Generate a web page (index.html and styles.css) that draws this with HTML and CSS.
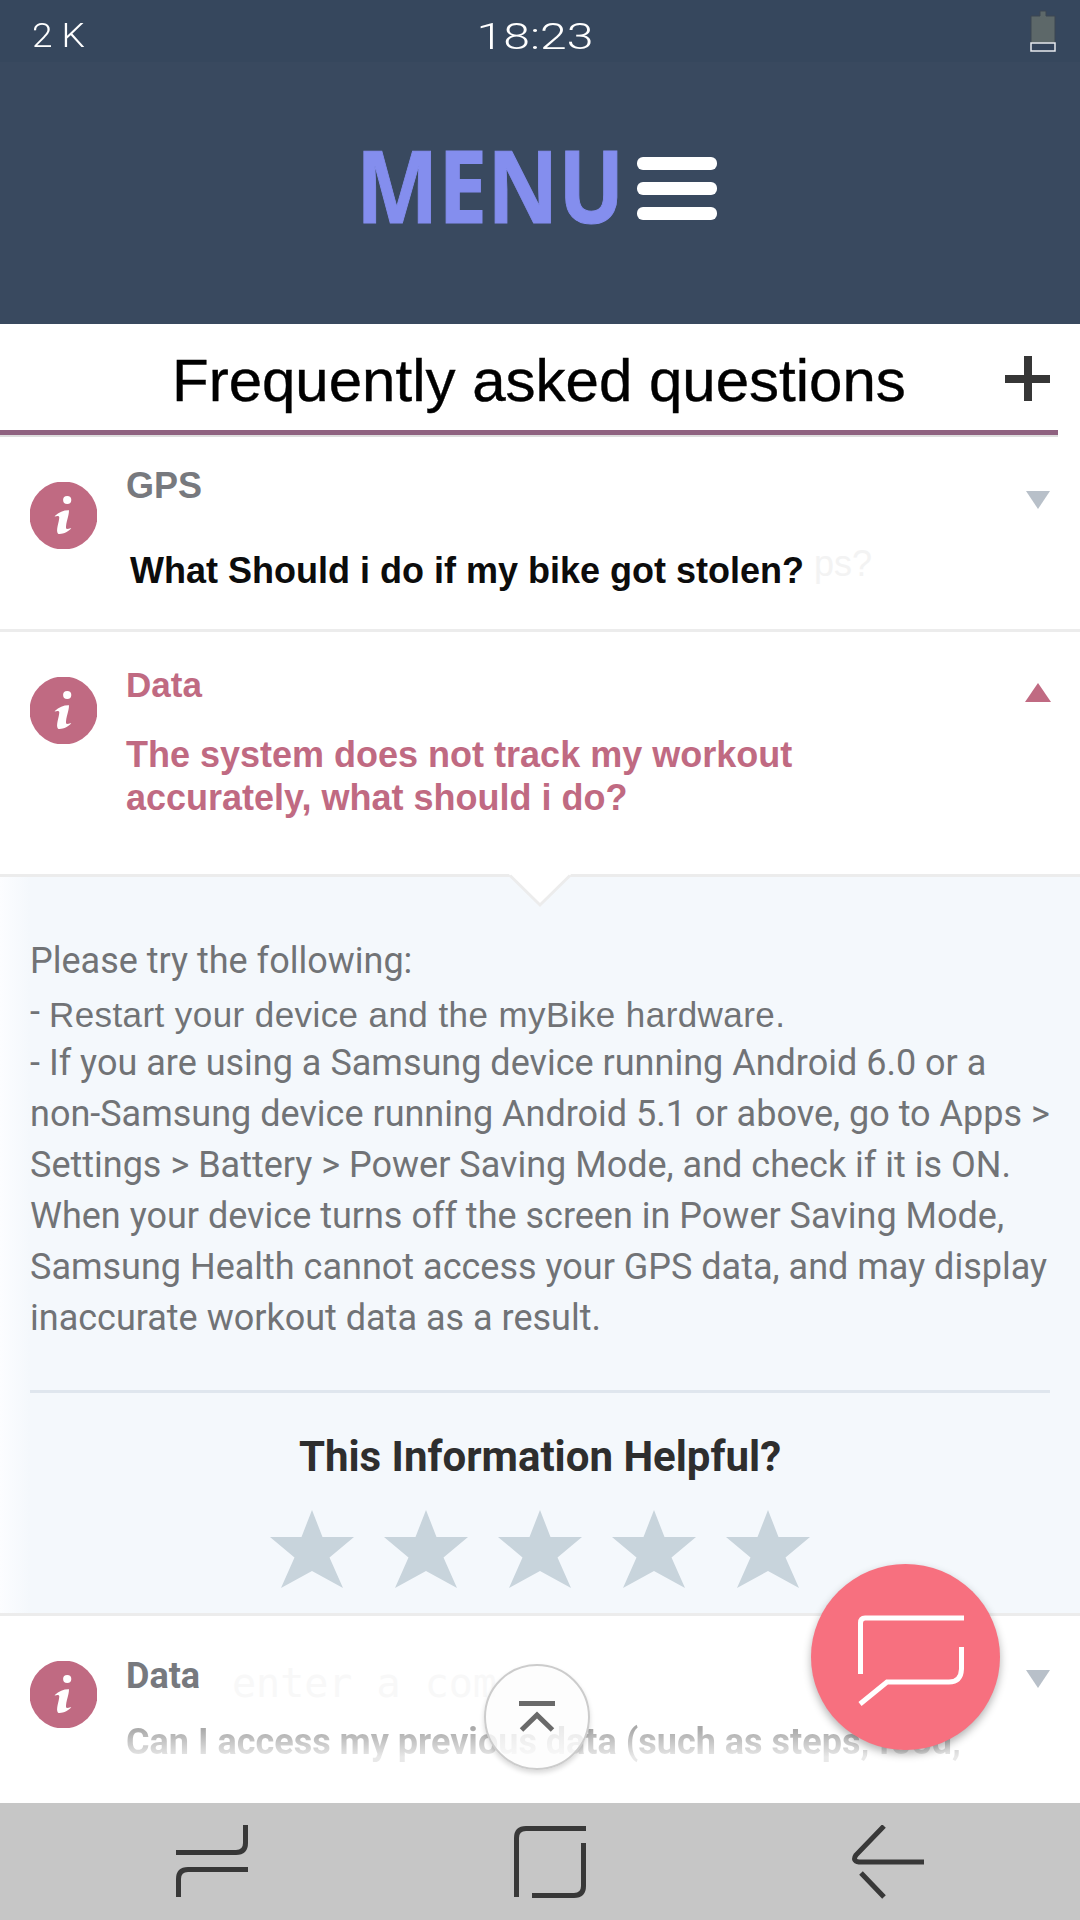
FILE: index.html
```html
<!DOCTYPE html>
<html lang="en">
<head>
<meta charset="utf-8">
<title>Frequently asked questions</title>
<link rel="stylesheet" href="styles.css">
</head>
<body>
<svg width="0" height="0" class="defs" aria-hidden="true">
  <symbol id="info" viewBox="0 0 67 67">
    <circle cx="33.5" cy="33.5" r="34" fill="#c06a82"/>
    <circle cx="37.2" cy="18" r="4.1" fill="#fff"/>
    <path d="M24.8 34C29 30 34 28 39 28.2C39 34 35.8 40 36 46.6C38 47.4 39.6 46.6 41.3 46C39 49.500 32 52.800 28 51.800C25.500 48 29 41 29.300 35.500C29 33.500 27 33.800 24.800 34.600Z" fill="#fff"/>
  </symbol>
  <symbol id="star" viewBox="0 0 84 78">
    <path d="M42 0 L52.5 27 H84 L59.5 47.5 L73 78 L42 61 L11 78 L24.5 47.5 L0 27 H31.5 Z" fill="#c8d4dc"/>
  </symbol>
</svg>
<main class="screen">
  <div class="status">
    <span class="network">2 K</span>
    <span class="clock">18:23</span>
    <svg class="battery" width="28" height="44" viewBox="0 0 28 44"><path d="M11 1h6v5h9v27H2V6h9z" fill="#5d6869" stroke="#3c4653"/><path d="M2 33h24v8H2z" fill="#33435a" stroke="#e8eaee" stroke-width="1.500"/></svg>
  </div>
  <header class="masthead">
    <span class="menu">MENU</span>
    <span class="bars"><i></i><i></i><i></i></span>
  </header>
  <div class="title">
    <h1>Frequently asked questions</h1>
    <svg class="plus" width="45" height="45" viewBox="0 0 45 45"><path d="M19 0h8v19h18v8H27v18h-8V27H0v-8h19z" fill="#363636"/></svg>
  </div>
  <div class="accent"></div>

  <section class="item gps">
    <svg class="info"><use href="#info"/></svg>
    <div class="copy">
      <h2>GPS</h2>
      <p class="question">What Should i do if my bike got stolen?<span class="trace">ps?</span></p>
    </div>
    <svg class="arrow" width="24" height="18" viewBox="0 0 24 18"><path d="M0 0h24L12 18z" fill="#b8c0c9"/></svg>
  </section>

  <section class="item open">
    <svg class="info"><use href="#info"/></svg>
    <div class="copy">
      <h2>Data</h2>
      <p class="question">The system does not track my workout<br>accurately, what should i do?</p>
    </div>
    <svg class="arrow" width="26" height="19" viewBox="0 0 26 19"><path d="M13 0L26 19H0z" fill="#c06a82"/></svg>
  </section>

  <section class="answer">
    <svg class="notch" width="62" height="34" viewBox="0 0 62 34"><path d="M0 0L1 1.5L31 31L61 1.5L62 0z" fill="#fff"/><path d="M1 1.5L31 31L61 1.5" fill="none" stroke="#ececec" stroke-width="3"/></svg>
    <div class="text">
      <p>Please try the following:</p>
      <p class="restart"><span class="dash">-</span><span>Restart your device and the myBike hardware.</span></p>
      <p>- If you are using a Samsung device running Android 6.0 or a</p>
      <p>non-Samsung device running Android 5.1 or above, go to Apps &gt;</p>
      <p>Settings &gt; Battery &gt; Power Saving Mode, and check if it is ON.</p>
      <p>When your device turns off the screen in Power Saving Mode,</p>
      <p>Samsung Health cannot access your GPS data, and may display</p>
      <p>inaccurate workout data as a result.</p>
    </div>
    <div class="rating">
      <h3>This Information Helpful?</h3>
      <div class="stars">
        <svg><use href="#star"/></svg><svg><use href="#star"/></svg><svg><use href="#star"/></svg><svg><use href="#star"/></svg><svg><use href="#star"/></svg>
      </div>
    </div>
  </section>

  <section class="item last">
    <span class="placeholder">enter a com</span>
    <svg class="info"><use href="#info"/></svg>
    <div class="copy">
      <h2>Data</h2>
      <p class="question">Can I access my previous data (such as steps, food,</p>
    </div>
    <svg class="arrow" width="24" height="18" viewBox="0 0 24 18"><path d="M0 0h24L12 18z" fill="#b8c0c9"/></svg>
    <div class="to-top"><svg width="40" height="36" viewBox="0 0 40 36"><path d="M2 4.500h36" stroke="#6a6a6a" stroke-width="5"/><path d="M4.500 31L20 16L35.500 31" fill="none" stroke="#6a6a6a" stroke-width="5"/></svg></div>
    <div class="chat"><svg width="110" height="96" viewBox="0 0 110 96" fill="none" stroke="#fff" stroke-width="5"><path d="M4.500 61V10Q4.500 5 9 5H108"/><path d="M105.500 34V56Q105 69 93 69H31L4 91"/></svg></div>
  </section>

  <nav class="nav">
    <svg width="72" height="76" viewBox="0 0 72 76"><path d="M0 27.500H60Q69.500 27.500 69.500 18V0M2.500 72V54Q2.500 44.500 12 44.500H72"/></svg>
    <svg width="72" height="76" viewBox="0 0 72 76"><path d="M2.500 72V13Q2.500 3.500 12 3.500H72M69.500 18V61Q69.500 70.500 60 70.500H18"/></svg>
    <svg width="74" height="76" viewBox="0 0 74 76"><path d="M33 1L5 30Q1 36 8 37H73M10 48L33 72"/></svg>
  </nav>
</main>
</body>
</html>
```
FILE: styles.css
```css
* { box-sizing: border-box; margin: 0; padding: 0; }
body { background: #fff; }
svg { display: block; flex: none; }
.defs { position: absolute; }
.screen { width: 1080px; height: 1920px; overflow: hidden; display: flex; flex-direction: column; font-family: "Liberation Sans", sans-serif; }
.screen > * { flex: none; }

.status { height: 62px; background: #36475d; color: #fff; display: grid; grid-template-columns: 1fr auto 1fr; font: 300 37px/42px Roboto, sans-serif; padding: 15px 22px 0 32px; }
.network { font-size: 34px; transform: scaleX(1.09); transform-origin: left; margin-top: -1px; }
.clock { transform: scaleX(1.3); margin: 1px 20px 0 0; }
.battery { justify-self: end; margin: -5px 1px 0 0; }

.masthead { height: 262px; background: #39495f; display: flex; padding: 62px 0 0 356px; }
.menu { font: 700 101px/120px "Open Sans", sans-serif; color: #848eee; width: 281px; transform: scaleX(.865); transform-origin: left; -webkit-text-stroke: 1px #848eee; }
.bars { display: flex; flex-direction: column; gap: 12px; padding-top: 33px; width: 80px; }
.bars i { height: 13px; border-radius: 6px; background: #fff; }

.title { height: 106px; display: flex; justify-content: space-between; padding: 32px 30px 0 172px; }
h1 { font-weight: 400; font-size: 60px; line-height: 50px; white-space: nowrap; color: #000; -webkit-text-stroke: .4px #000; }
.accent { width: 1058px; height: 7px; background: #8f6280; border-bottom: 2px solid #ddd; }

.item { position: relative; display: flex; padding: 45px 30px 0; border-bottom: 3px solid #ececec; }
.info { width: 67px; height: 67px; }
.copy { flex: 1; padding-left: 29px; white-space: nowrap; }
h2 { font-size: 36px; line-height: 42px; }
.question { font-weight: 700; font-size: 36px; line-height: 43px; }
.gps { height: 195px; }
.gps h2 { color: #77797e; margin-top: -17px; }
.gps .question { color: #0c0c0c; padding: 42px 0 0 4px; }
.trace { color: #f3f3f3; font-weight: 400; margin-left: 10px; position: relative; top: -7px; }
.gps .arrow { margin-top: 9px; }
.open { height: 245px; color: #c06a82; padding-right: 29px; }
.open h2 { margin-top: -13px; font-size: 35px; }
.open .question { padding-top: 27px; }
.open .arrow { margin-top: 6px; }

.answer { position: relative; height: 736px; background: linear-gradient(90deg, #fcfdff, #f4f8fc 30px); padding: 0 30px; }
.notch { position: absolute; left: 509px; top: -3px; }
.text { height: 516px; padding-top: 59px; border-bottom: 3px solid #dfe6ee; font: 36px/51px Roboto, sans-serif; color: #717376; white-space: nowrap; }
.restart { font-family: "Liberation Sans", sans-serif; line-height: 55px; display: flex; gap: 9px; margin-bottom: -4px; font-size: 35px; letter-spacing: .42px; }
.dash { font: 36px/51px Roboto, sans-serif; letter-spacing: 0; }
.rating { display: flex; flex-direction: column; align-items: center; padding-top: 39px; }
h3 { font: 700 42px/50px Roboto, sans-serif; color: #2e2e2e; white-space: nowrap; }
.stars { display: flex; gap: 30px; padding-top: 28px; }
.stars svg { width: 84px; height: 78px; }

.last { height: 190px; border-top: 3px solid #ececec; border-bottom: 0; font-family: Roboto, sans-serif; }
.last h2 { color: #77797e; margin-top: -6px; }
.last .question { margin-top: 24px; background: linear-gradient(#aaa 8px, #e8e8e8 36px); background-clip: text; color: transparent; }
.last .arrow { margin-top: 9px; }
.placeholder { position: absolute; left: 232px; top: 45px; font: 40px/44px "DejaVu Sans Mono", monospace; color: #f8f8f8; white-space: nowrap; }
.to-top { position: absolute; left: 484px; top: 48px; width: 106px; height: 106px; border-radius: 50%; border: 2px solid #ccc; background: rgba(252,252,252,.78); box-shadow: 0 3px 5px rgba(0,0,0,.15); display: grid; place-items: center; }
.chat { position: absolute; left: 811px; top: -52px; width: 189px; height: 186px; border-radius: 50%; background: #f7707f; box-shadow: 0 4px 8px rgba(0,0,0,.3); padding: 49px 0 0 45px; }

.nav { height: 117px; background: #c6c6c6; display: flex; justify-content: space-between; padding: 22px 155px 0 176px; }
.nav svg { fill: none; stroke: #383838; stroke-width: 5; }
```
